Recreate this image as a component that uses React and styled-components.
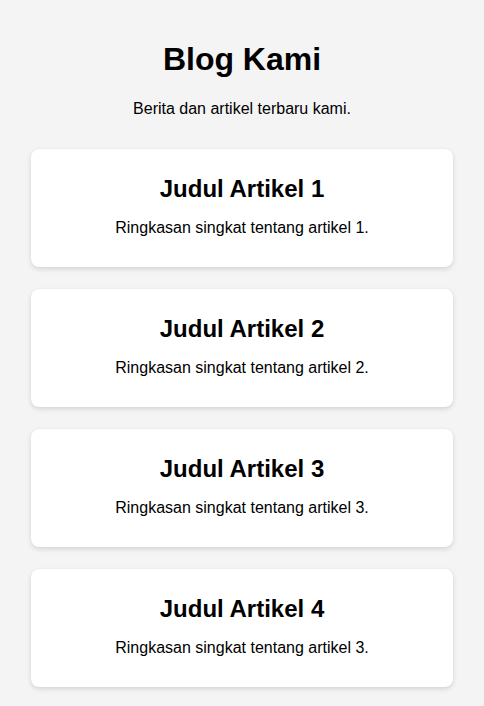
import React from 'react';
import styled, { createGlobalStyle } from 'styled-components';

const Global = createGlobalStyle`
  html, body { margin: 0; padding: 0; background: #f4f4f4; }
  body {
    font-family: "Liberation Sans", Arial, sans-serif;
    color: #000;
  }
`;

const Page = styled.div`
  padding: 41px 8px 40px;
  display: flex;
  flex-direction: column;
  align-items: center;
`;

const Title = styled.h1`
  margin: 0;
  font-size: 32px;
  line-height: 37px;
  font-weight: 700;
  text-align: center;
`;

const Subtitle = styled.p`
  margin: 22px 0 0;
  font-size: 16px;
  line-height: 18px;
  text-align: center;
`;

const List = styled.div`
  width: 90%;
  margin-top: 31px;
  display: flex;
  flex-direction: column;
  gap: 22px;
`;

const Card = styled.article`
  background: #fff;
  border-radius: 8px;
  box-shadow: 0 2px 5px rgba(0,0,0,0.13), 0 0 1px rgba(0,0,0,0.08);
  padding: 26px 20px 30px;
  text-align: center;
  display: flex;
  flex-direction: column;
  gap: 16px;
`;

const CardTitle = styled.h2`
  margin: 0;
  font-size: 24px;
  line-height: 28px;
  font-weight: 700;
`;

const CardText = styled.p`
  margin: 0;
  font-size: 16px;
  line-height: 18px;
`;

const posts = [
  { title: 'Judul Artikel 1', summary: 'Ringkasan singkat tentang artikel 1.' },
  { title: 'Judul Artikel 2', summary: 'Ringkasan singkat tentang artikel 2.' },
  { title: 'Judul Artikel 3', summary: 'Ringkasan singkat tentang artikel 3.' },
  { title: 'Judul Artikel 4', summary: 'Ringkasan singkat tentang artikel 3.' },
];

export default function App() {
  return (
    <>
      <Global />
      <Page>
        <Title>Blog Kami</Title>
        <Subtitle>Berita dan artikel terbaru kami.</Subtitle>
        <List>
          {posts.map(p => (
            <Card key={p.title}>
              <CardTitle>{p.title}</CardTitle>
              <CardText>{p.summary}</CardText>
            </Card>
          ))}
        </List>
      </Page>
    </>
  );
}
